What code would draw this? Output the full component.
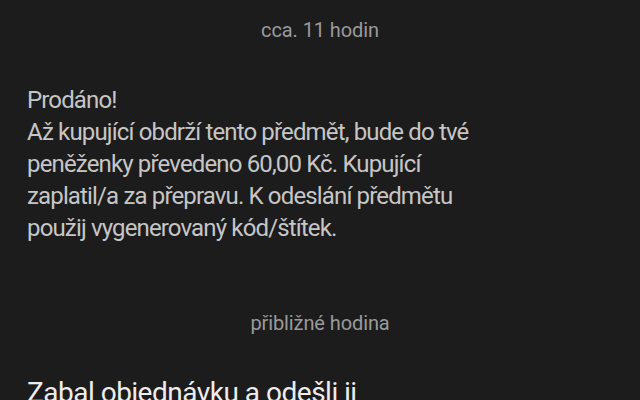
export default function App() {
  return (
    <div
      className="h-[400px] w-[640px] overflow-hidden bg-[#1c1c1c]"
      style={{ fontFamily: "Roboto, 'Liberation Sans', sans-serif" }}
    >
      <div className="pt-[18px] text-center text-[20px] leading-6 tracking-[-0.1px] text-[#9a9a9a]">cca. 11 hodin</div>

      <div className="w-[500px] pl-[27px] pt-[42px] text-[24px] leading-8 tracking-[-0.85px] text-[#c6c6c6]">
        <p>Prodáno!</p>
        <p>
          Až kupující obdrží tento předmět, bude do tvé peněženky převedeno 60,00 Kč. Kupující zaplatil/a za
          přepravu. K odeslání předmětu použij vygenerovaný kód/štítek.
        </p>
      </div>

      <div className="pt-[67px] text-center text-[20px] leading-6 tracking-[-0.1px] text-[#9a9a9a]">přibližné hodina</div>

      <div className="pl-[27px] pt-[41px] text-[28px] leading-[34px] tracking-[-0.5px] whitespace-nowrap text-[#ededed]">
        Zabal objednávku a odešli ji
      </div>
    </div>
  )
}
